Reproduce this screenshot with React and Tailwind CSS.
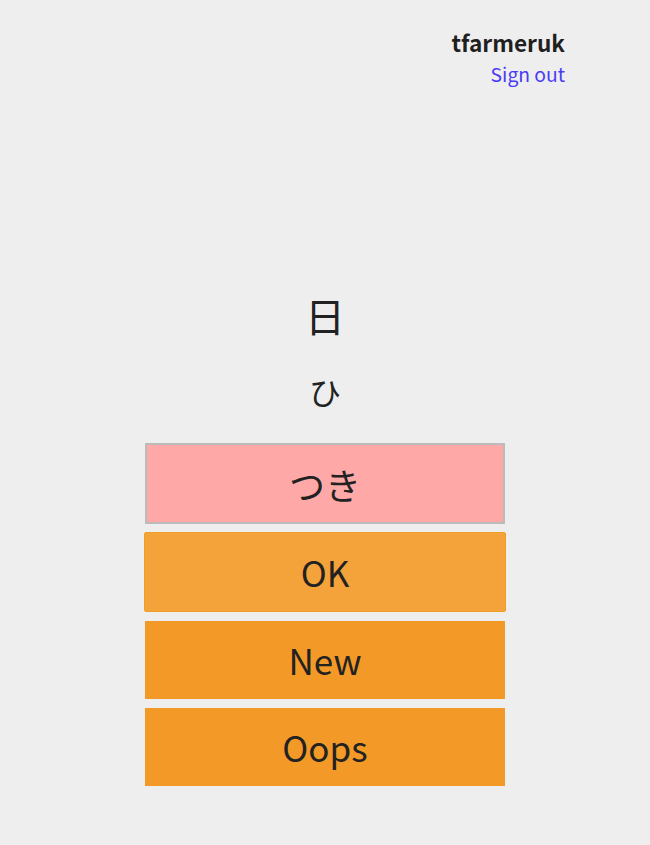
import React from "react";

const font = { fontFamily: '"Noto Sans CJK JP", "Noto Sans", sans-serif' };

export default function App() {
  const answers = ["New", "Oops"];

  return (
    <div className="min-h-[845px] bg-[#eeeeee] text-[#222]" style={font}>
      {/* Header */}
      <header className="flex flex-col items-end pt-[27px] pr-[85px]">
        <span className="text-[22.6px] leading-[32px] font-semibold text-[#1f1f1f]">tfarmeruk</span>
        <a href="#" className="mt-[1px] text-[19.3px] leading-[28px] text-[#4a3cf5]">
          Sign out
        </a>
      </header>

      {/* Card */}
      <main className="flex flex-col items-center">
        <div className="mt-[199px] text-[40px] leading-[56px]">日</div>
        <div className="mt-[24px] text-[32px] leading-[48px]">ひ</div>

        <div className="mt-[28px] flex flex-col w-[360px]">
          <button className="h-[81px] w-full border-2 border-[#bbbbbb] bg-[#ffa8a8] text-[36px] text-[#222]">
            つき
          </button>
          <button className="mt-[8px] -mx-px h-[80px] border border-[#eea025] rounded-[2px] bg-[#f4a23a] text-[35px] text-[#222]">
            OK
          </button>
          {answers.map((a) => (
            <button
              key={a}
              className="mt-[9px] h-[78px] w-full bg-[#f39928] text-[35px] text-[#222]"
            >
              {a}
            </button>
          ))}
        </div>
      </main>
    </div>
  );
}
